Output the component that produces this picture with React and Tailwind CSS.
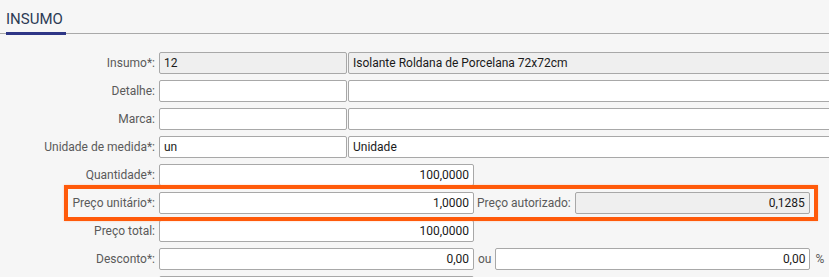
import React from 'react';

const font = { fontFamily: 'Roboto, "Noto Sans", Arial, sans-serif' };

function Field({ value = '', readOnly = false, right = false, className = '' }) {
  return (
    <div
      className={`h-[22px] shrink-0 rounded-[2px] border border-[#a8a8a8] px-[4px] text-[12px] leading-[20px] text-[#1a1a1a] ${
        readOnly ? 'bg-[#efefef]' : 'bg-white'
      } ${right ? 'text-right' : ''} ${className}`}
    >
      {value}
    </div>
  );
}

function Row({ label, children }) {
  return (
    <div className="flex h-[22px] items-center">
      <div className="w-[157px] shrink-0 pr-[2px] text-right text-[12px] text-[#5a5a5a]">{label}</div>
      <div className="ml-[2px] flex items-center">{children}</div>
    </div>
  );
}

export default function App() {
  return (
    <div className="h-[277px] w-[829px] overflow-hidden bg-[#f6f6f6]" style={font}>
      <div className="px-[6px] pt-[9px]">
        <div className="text-[15px] leading-[20px] text-[#2c3b55]">INSUMO</div>
      </div>
      <div className="relative mt-[3px] h-[3px]">
        <div className="absolute left-0 right-0 top-[1px] h-[1px] bg-[#a9a9a9]" />
        <div className="absolute left-[6px] top-0 h-[3px] w-[60px] bg-[#2e3686]" />
      </div>

      <div className="mt-[17px] flex flex-col gap-[6px]">
        <Row label="Insumo*:">
          <Field value="12" readOnly className="w-[188px]" />
          <Field value="Isolante Roldana de Porcelana 72x72cm" readOnly className="ml-[1px] w-[500px]" />
        </Row>
        <Row label="Detalhe:">
          <Field className="w-[188px]" />
          <Field className="ml-[1px] w-[500px]" />
        </Row>
        <Row label="Marca:">
          <Field className="w-[188px]" />
          <Field className="ml-[1px] w-[500px]" />
        </Row>
        <Row label="Unidade de medida*:">
          <Field value="un" className="w-[188px]" />
          <Field value="Unidade" className="ml-[1px] w-[500px]" />
        </Row>
        <Row label="Quantidade*:">
          <Field value="100,0000" right className="w-[315px]" />
        </Row>
        <div className="relative">
          <div className="pointer-events-none absolute left-[64px] top-[-7px] h-[36px] w-[754px] border-[4px] border-[#ff5a0a] shadow-[0_0_2px_rgba(255,120,60,0.35)]" />
          <Row label="Preço unitário*:">
            <Field value="1,0000" right className="w-[315px]" />
            <span className="ml-[3px] mr-[4px] text-[12px] text-[#5a5a5a]">Preço autorizado:</span>
            <Field value="0,1285" right readOnly className="w-[235px]" />
          </Row>
        </div>
        <Row label="Preço total:">
          <Field value="100,0000" right className="w-[315px]" />
        </Row>
        <Row label="Desconto*:">
          <Field value="0,00" right className="w-[315px]" />
          <span className="ml-[4px] mr-[4px] text-[12px] text-[#5a5a5a]">ou</span>
          <Field value="0,00" right className="w-[315px]" />
          <span className="ml-[5px] text-[12px] text-[#5a5a5a]">%</span>
        </Row>
        <Row label="">
          <Field className="w-[315px]" />
        </Row>
      </div>
    </div>
  );
}
